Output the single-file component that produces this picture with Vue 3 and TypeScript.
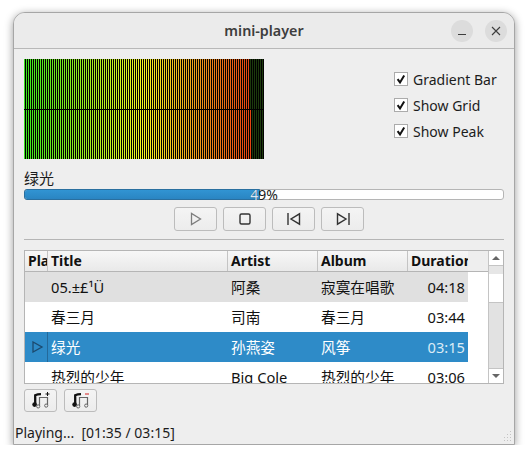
<script setup lang="ts">
import { ref } from 'vue'

interface Track {
  title: string
  artist: string
  album: string
  duration: string
  playing?: boolean
  selected?: boolean
}

const options = ['Gradient Bar', 'Show Grid', 'Show Peak']
const percent = ref(49)

const tracks: Track[] = [
  { title: '05.±£¹Ü', artist: '阿桑', album: '寂寞在唱歌', duration: '04:18', selected: true },
  { title: '春三月', artist: '司南', album: '春三月', duration: '03:44' },
  { title: '绿光', artist: '孙燕姿', album: '风筝', duration: '03:15', playing: true },
  { title: '热烈的少年', artist: 'Big Cole', album: '热烈的少年', duration: '03:06' }
]

// green -> yellow -> red across the 120 bars of a channel
function barColor(i: number, active: boolean): string {
  if (!active) return '#1c3a0c'
  const t = i / 119
  const mix = (a: number, b: number, k: number) => Math.round(a + (b - a) * k)
  if (t < 0.5) {
    const k = t / 0.5
    return `rgb(${mix(58, 244, k)},${mix(228, 244, k)},${mix(28, 33, k)})`
  }
  const k = (t - 0.5) / 0.5
  return `rgb(${mix(244, 226, k)},${mix(244, 48, k)},${mix(33, 15, k)})`
}

const channels = [113, 114].map((level) =>
  Array.from({ length: 120 }, (_, i) => barColor(i, i < level))
)
</script>

<template>
  <div class="window">
    <header class="titlebar">
      <span class="title">mini-player</span>
      <button class="win-btn min-btn">
        <svg width="10" height="10" viewBox="0 0 10 10"><path d="M1 8.5h8" stroke="#3d3d3d" stroke-width="1" /></svg>
      </button>
      <button class="win-btn close-btn">
        <svg width="10" height="10" viewBox="0 0 10 10"><path d="M1 1l8 8M9 1l-8 8" stroke="#3d3d3d" stroke-width="1.1" /></svg>
      </button>
    </header>

    <div class="content">
      <div class="top">
        <div class="spectrum">
          <div v-for="(bars, c) in channels" :key="c" class="channel">
            <div v-for="(color, i) in bars" :key="i" class="bar" :style="{ background: color }"></div>
          </div>
          <div class="grid-line"></div>
        </div>
        <div class="options">
          <label v-for="opt in options" :key="opt" class="option">
            <span class="check">
              <svg width="12" height="12" viewBox="0 0 12 12"><path d="M2.6 6.2l2.4 3.2 4.2-7" fill="none" stroke="#111" stroke-width="2" /></svg>
            </span>
            {{ opt }}
          </label>
        </div>
      </div>

      <div class="song">绿光</div>
      <div class="progress">
        <div class="fill" :style="{ width: percent + '%' }"></div>
        <span class="pct">{{ percent }}%</span>
        <div class="pct-clip" :style="{ width: percent + '%' }"><span class="pct-light">{{ percent }}%</span></div>
      </div>

      <div class="controls">
        <button class="btn">
          <svg width="16" height="16" viewBox="0 0 16 16"><path d="M3.5 2.5v11l9-5.5z" fill="none" stroke="#7d7d7d" stroke-width="1.3" /></svg>
        </button>
        <button class="btn">
          <svg width="16" height="16" viewBox="0 0 16 16"><rect x="3" y="3" width="10" height="10" rx="1.5" fill="none" stroke="#333" stroke-width="1.4" /></svg>
        </button>
        <button class="btn">
          <svg width="16" height="16" viewBox="0 0 16 16"><path d="M2 2v12" stroke="#333" stroke-width="1.4" /><path d="M13.5 2.8v10.4L5 8z" fill="none" stroke="#333" stroke-width="1.4" /></svg>
        </button>
        <button class="btn">
          <svg width="16" height="16" viewBox="0 0 16 16"><path d="M14 2v12" stroke="#333" stroke-width="1.4" /><path d="M2.5 2.8v10.4L11 8z" fill="none" stroke="#333" stroke-width="1.4" /></svg>
        </button>
      </div>

      <div class="divider"></div>

      <div class="table">
        <div class="table-main">
          <div class="thead">
            <div class="th">Pla</div>
            <div class="th">Title</div>
            <div class="th">Artist</div>
            <div class="th">Album</div>
            <div class="th last">Duration</div>
          </div>
          <div class="tbody">
            <div
              v-for="t in tracks"
              :key="t.duration"
              class="row"
              :class="{ gray: t.selected, current: t.playing }"
            >
              <div class="cell state">
                <svg v-if="t.playing" width="12" height="12" viewBox="0 0 12 12"><path d="M1 1v10l9-5z" fill="none" stroke="#1c4a6e" stroke-width="1.3" /></svg>
              </div>
              <div class="cell">{{ t.title }}</div>
              <div class="cell">{{ t.artist }}</div>
              <div class="cell">{{ t.album }}</div>
              <div class="cell time">{{ t.duration }}</div>
            </div>
          </div>
        </div>
        <div class="scrollbar">
          <div class="arrow"><i class="tri up"></i></div>
          <div class="thumb"></div>
          <div class="track"></div>
          <div class="arrow bottom"><i class="tri down"></i></div>
        </div>
      </div>

      <div class="list-btns">
        <button class="btn small">
          <svg width="18" height="17" viewBox="0 0 18 17">
            <path d="M3.2 12V3.2c2-.9 3.6-1 5.8-1" fill="none" stroke="#111" stroke-width="2.3" />
            <circle cx="2.6" cy="12.6" r="2.3" fill="#111" />
            <path d="M7.5 14V5.5h8V13" fill="none" stroke="#666" stroke-width="1.2" />
            <circle cx="6.2" cy="14.4" r="1.6" fill="none" stroke="#666" />
            <circle cx="14.2" cy="13.6" r="1.6" fill="none" stroke="#666" />
            <path d="M13.5 2h4M15.5 0v4" stroke="#111" stroke-width="1" />
          </svg>
        </button>
        <button class="btn small">
          <svg width="18" height="17" viewBox="0 0 18 17">
            <path d="M3.2 12V3.2c2-.9 3.6-1 5.8-1" fill="none" stroke="#111" stroke-width="2.3" />
            <circle cx="2.6" cy="12.6" r="2.3" fill="#111" />
            <path d="M7.5 14V5.5h8V13" fill="none" stroke="#666" stroke-width="1.2" />
            <circle cx="6.2" cy="14.4" r="1.6" fill="none" stroke="#666" />
            <circle cx="14.2" cy="13.6" r="1.6" fill="none" stroke="#666" />
            <path d="M13 2h4" stroke="#d42020" stroke-width="1" />
          </svg>
        </button>
      </div>
    </div>

    <div class="status">Playing...&nbsp; [01:35 / 03:15]</div>

    <svg class="grip" width="10" height="11" viewBox="0 0 10 11">
      <g fill="#c4c4c4">
        <rect x="8" y="0" width="1" height="1" /><rect x="8" y="3" width="1" height="1" /><rect x="8" y="6" width="1" height="1" /><rect x="8" y="9" width="1" height="1" />
        <rect x="5" y="3" width="1" height="1" /><rect x="5" y="6" width="1" height="1" /><rect x="5" y="9" width="1" height="1" />
        <rect x="2" y="6" width="1" height="1" /><rect x="2" y="9" width="1" height="1" />
      </g>
    </svg>
  </div>
</template>

<style scoped>
.window {
  position: relative;
  box-sizing: border-box;
  width: 502px;
  height: 433px;
  margin: 12px 0 0 13px;
  background: #eeeeee;
  border: 1px solid #a6a6a6;
  border-radius: 12px 12px 0 0;
  box-shadow: 0 2px 9px rgba(0, 0, 0, 0.4);
  font-family: "Noto Sans", "Noto Sans CJK SC", sans-serif;
  font-size: 14px;
  color: #1c1c1c;
}

.titlebar {
  position: relative;
  display: flex;
  align-items: center;
  justify-content: flex-end;
  gap: 12px;
  box-sizing: border-box;
  height: 36px;
  padding: 0 7px 0 0;
  background: #ebebeb;
  border-bottom: 1px solid #b8b8b8;
  border-radius: 11px 11px 0 0;
}

.title {
  position: absolute;
  left: 0;
  right: 0;
  text-align: center;
  font-weight: 600;
  font-size: 14.3px;
  color: #3d3d3d;
}

.win-btn {
  display: flex;
  align-items: center;
  justify-content: center;
  width: 22px;
  height: 22px;
  padding: 0;
  border: 0;
  border-radius: 50%;
  background: #dcdcdc;
}

.content {
  padding: 10px 10px 0;
}

.top {
  display: flex;
  height: 100px;
}

.spectrum {
  position: relative;
  width: 240px;
  height: 100px;
  background: #000;
}

.channel {
  display: flex;
  gap: 1px;
  height: 50px;
}

.bar {
  flex: 0 0 1px;
}

.grid-line {
  position: absolute;
  left: 0;
  right: 0;
  top: 50px;
  height: 1px;
  background: #000;
}

.options {
  display: flex;
  flex-direction: column;
  gap: 8px;
  margin: 11px 0 0 auto;
  width: 110px;
}

.option {
  display: flex;
  align-items: center;
  gap: 5px;
  height: 18px;
  white-space: nowrap;
}

.check {
  display: flex;
  align-items: center;
  justify-content: center;
  box-sizing: border-box;
  width: 14px;
  height: 14px;
  background: #fff;
  border: 1px solid #ababab;
}

.song {
  height: 21px;
  margin-top: 9px;
  font-size: 15px;
  line-height: 20px;
}

.progress {
  position: relative;
  box-sizing: border-box;
  height: 11px;
  background: #fff;
  border: 1px solid #b5b5b5;
  border-radius: 3px;
}

.fill {
  height: 100%;
  background: linear-gradient(#3194d3, #2a85c2);
  outline: 1px solid #2a6f9f;
  border-radius: 2px 0 0 2px;
}

.pct,
.pct-light {
  position: absolute;
  top: -5px;
  left: 0;
  width: 478px;
  text-align: center;
  line-height: 20px;
}

.pct-clip {
  position: absolute;
  top: -5px;
  left: 0;
  height: 20px;
  overflow: hidden;
}

.pct-light {
  top: 0;
  color: #d6e9f7;
}

.controls {
  display: flex;
  gap: 6px;
  margin-top: 7px;
  padding-left: 150px;
}

.btn {
  display: flex;
  align-items: center;
  justify-content: center;
  box-sizing: border-box;
  width: 43px;
  height: 24px;
  padding: 0;
  background: linear-gradient(#f4f4f4, #ececec);
  border: 1px solid #bcbcbc;
  border-radius: 3px;
}

.btn.small {
  width: 33px;
}

.divider {
  height: 1px;
  margin-top: 8px;
  background: #b5b5b5;
}

.table {
  display: flex;
  box-sizing: border-box;
  height: 134px;
  margin-top: 10px;
  background: #fff;
  border: 1px solid #b5b5b5;
}

.table-main {
  flex: 1;
  min-width: 0;
  overflow: hidden;
}

.thead {
  display: grid;
  grid-template-columns: 23px 180px 90px 90px 60px;
  box-sizing: border-box;
  height: 21px;
  background: #eeeeee;
  border-bottom: 1px solid #b5b5b5;
}

.th {
  overflow: hidden;
  padding-left: 3px;
  font-weight: 700;
  line-height: 20px;
  color: #111;
  white-space: nowrap;
  background: linear-gradient(#f7f7f7, #e9e9e9);
  border-right: 1px solid #c4c4c4;
}

.th.last {
  border-right: 0;
}

.tbody {
  height: 111px;
  overflow: hidden;
}

.row {
  display: grid;
  grid-template-columns: 23px 180px 90px 90px 60px;
  width: 443px;
  height: 30px;
  color: #111;
  font-size: 14.67px;
  line-height: 30px;
}

.row.gray {
  background: #e0e0e0;
}

.row.current {
  background: #2e8bc8;
  color: #fff;
}

.row.current .state {
  border-right: 1px solid #24699a;
}

.row.current .time {
  color: #dcebf6;
}

.cell {
  padding-left: 3px;
  white-space: nowrap;
  overflow: hidden;
}

.state {
  display: flex;
  align-items: center;
  box-sizing: border-box;
  padding-left: 7px;
}

.time {
  padding: 0 3px 0 0;
  text-align: right;
}

.scrollbar {
  display: flex;
  flex-direction: column;
  box-sizing: border-box;
  width: 15px;
  border-left: 1px solid #c4c4c4;
}

.arrow {
  display: flex;
  align-items: center;
  justify-content: center;
  height: 14px;
  background: #fff;
}

.arrow.bottom {
  border-top: 1px solid #c4c4c4;
}

.tri {
  width: 0;
  height: 0;
  border-left: 4px solid transparent;
  border-right: 4px solid transparent;
}

.tri.up {
  border-bottom: 4px solid #666;
}

.tri.down {
  border-top: 4px solid #666;
}

.thumb {
  height: 38px;
  background: linear-gradient(#e6e6e6 0 8px, #fff 8px);
  border-top: 1px solid #c4c4c4;
  border-bottom: 1px solid #c4c4c4;
  box-sizing: border-box;
}

.track {
  flex: 1;
  background: #e2e2e2;
}

.list-btns {
  display: flex;
  gap: 7px;
  margin-top: 5px;
}

.list-btns .btn {
  height: 23px;
}

.status {
  margin: 11px 0 0 1px;
  line-height: 20px;
}

.grip {
  position: absolute;
  right: 2px;
  bottom: 2px;
}
</style>
